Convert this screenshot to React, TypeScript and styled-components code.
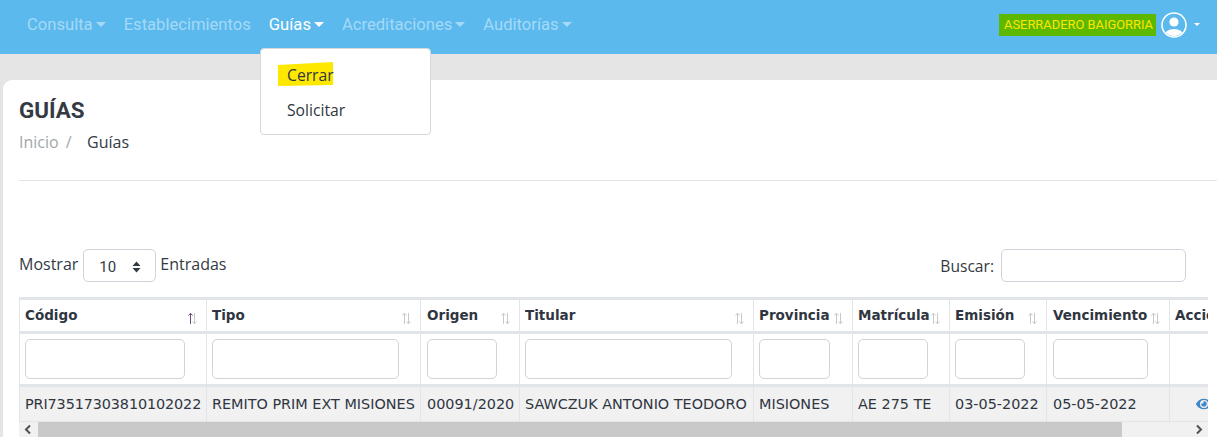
import React from "react";
import styled, { createGlobalStyle } from "styled-components";
import { FaEye } from "react-icons/fa";

const Global = createGlobalStyle`
  html, body { margin: 0; padding: 0; height: 437px; overflow: hidden; background: #e5e5e5; }
  * { box-sizing: border-box; }
  body { font-family: "Noto Sans", "Open Sans", sans-serif; color: #333a45; }
`;

const Page = styled.div`
  width: 1217px;
  height: 437px;
  position: relative;
  overflow: hidden;
`;

const NavBar = styled.nav`
  height: 54px;
  background: #5bb9ee;
  display: flex;
  align-items: center;
  justify-content: space-between;
  padding: 0 17px 5px 18px;
  font-family: Roboto, sans-serif;
`;

const NavList = styled.div`
  display: flex;
  align-items: center;
`;

const NavLink = styled.span<{ $active?: boolean }>`
  font-size: 16.6px;
  line-height: 24px;
  padding: 0 9px;
  color: ${(p) => (p.$active ? "#ffffff" : "#a5d9f6")};
  white-space: nowrap;
`;

const Caret = styled.i<{ $small?: boolean }>`
  display: inline-block;
  margin-left: ${(p) => (p.$small ? 0 : 3)}px;
  vertical-align: 3px;
  border-top: ${(p) => (p.$small ? 3.5 : 5)}px solid currentColor;
  border-left: ${(p) => (p.$small ? 3 : 5)}px solid transparent;
  border-right: ${(p) => (p.$small ? 3 : 5)}px solid transparent;
`;

const UserBox = styled.div`
  display: flex;
  align-items: center;
  color: #fff;
`;

const Company = styled.span`
  background: #5cb800;
  color: #ffe600;
  font-size: 12.9px;
  line-height: 22px;
  height: 22px;
  width: 157px;
  padding-left: 5px;
  white-space: nowrap;
`;

const Avatar = styled.svg`
  width: 26px;
  height: 26px;
  margin-left: 5px;
  margin-right: 7px;
`;

const Menu = styled.div`
  position: absolute;
  left: 260px;
  top: 48px;
  width: 171px;
  height: 87px;
  background: #fff;
  border: 1px solid #d5d8dc;
  border-radius: 4px;
  padding: 9px 0;
  color: #2f3640;
  z-index: 5;
`;

const MenuItem = styled.div`
  height: 35px;
  line-height: 35px;
  padding-left: 26px;
  position: relative;
  font-family: "Open Sans", sans-serif;
  font-size: 15.7px;
`;

const Marker = styled.span`
  position: absolute;
  left: 17px;
  top: 4px;
  width: 55px;
  height: 24px;
  background: #ffe800;
  clip-path: polygon(0 12%, 100% 0, 100% 96%, 0 100%);
`;

const MenuText = styled.span`
  position: relative;
`;

const Main = styled.main`
  padding: 26px 0 0 3px;
`;

const Card = styled.section`
  width: 1230px;
  height: 360px;
  background: #fff;
  border-radius: 9px 0 0 0;
  padding: 16px 0 0 16px;
`;

const Title = styled.h1`
  margin: 0;
  font-family: Roboto, sans-serif;
  font-weight: 700;
  font-size: 22.4px;
  line-height: 28px;
  color: #343a44;
`;

const Crumbs = styled.div`
  display: flex;
  margin-top: 7px;
  font-size: 16px;
  line-height: 22px;
  font-family: "Open Sans", sans-serif;
`;

const CrumbMuted = styled.span`
  color: #a3a7ab;
  width: 68px;
  word-spacing: 3px;
`;

const CrumbNow = styled.span`
  color: #343a44;
`;

const Rule = styled.hr`
  margin: 27px 0 0;
  width: 1198px;
  border: 0;
  border-top: 1px solid #e3e5e8;
`;

const Controls = styled.div`
  display: flex;
  justify-content: space-between;
  align-items: flex-start;
  width: 1167px;
  height: 48px;
  margin-top: 68px;
`;

const LengthBox = styled.div`
  display: flex;
  align-items: flex-start;
  font-family: "Open Sans", sans-serif;
  font-size: 16px;
  color: #343a44;
  line-height: 30px;
`;

const SelectBox = styled.div`
  width: 73px;
  height: 33px;
  margin: 0 4px 0 5px;
  border: 1px solid #ced4da;
  border-radius: 5px;
  display: flex;
  align-items: center;
  justify-content: space-between;
  padding: 3px 14px 0 15px;
  font-family: Roboto, sans-serif;
  font-size: 15px;
  line-height: 20px;
`;

const SearchBox = styled.div`
  display: flex;
  align-items: center;
  font-family: "Open Sans", sans-serif;
  font-size: 15.6px;
  color: #343a44;
`;

const SearchInput = styled.div`
  width: 185px;
  height: 33px;
  margin-left: 7px;
  border: 1px solid #ced4da;
  border-radius: 5px;
`;

const TableWrap = styled.div`
  width: 1189px;
  height: 125px;
  overflow: hidden;
`;

const Table = styled.table`
  table-layout: fixed;
  width: 1240px;
  border-collapse: collapse;
  font-family: "DejaVu Sans", sans-serif;
  font-size: 14.4px;
  color: #30363f;
`;

const Head = styled.th<{ $pad?: number }>`
  height: 34px;
  border: 1px solid #e1e4e8;
  border-top-width: 3px;
  border-bottom-width: 3px;
  padding: 0 0 2px ${(p) => p.$pad ?? 5}px;
  text-align: left;
  font-weight: 700;
  white-space: nowrap;
  position: relative;
  overflow: hidden;
  font-size: 13.5px;
`;

const SortIcon = styled.svg`
  position: absolute;
  right: 8px;
  bottom: 6px;
  width: 11px;
  height: 13px;
`;

const FilterCell = styled.td<{ $pad?: number }>`
  height: 53px;
  border: 1px solid #e1e4e8;
  border-bottom-width: 3px;
  padding: 0 0 0 ${(p) => p.$pad ?? 5}px;
`;

const FilterInput = styled.div<{ $w: number }>`
  height: 40px;
  width: ${(p) => p.$w}px;
  border: 1px solid #ced4da;
  border-radius: 5px;
  background: #fff;
`;

const DataCell = styled.td<{ $pad?: number; $tight?: boolean }>`
  height: 36px;
  background: #f1f1f2;
  border: 1px solid #e1e4e8;
  border-top: 0;
  padding: 0 0 0 ${(p) => p.$pad ?? 5}px;
  white-space: nowrap;
  overflow: hidden;
  letter-spacing: ${(p) => (p.$tight ? "-0.12px" : "normal")};
`;

const EyeCell = styled(DataCell)`
  color: #3f87c9;
  font-size: 16px;
  padding-top: 4px;
`;

const ScrollBar = styled.div`
  width: 1189px;
  height: 15px;
  background: #f1f1f1;
  display: flex;
  align-items: center;
`;

const ScrollArrow = styled.svg`
  width: 19px;
  height: 15px;
  flex: none;
`;

const Thumb = styled.div`
  width: 1084px;
  height: 15px;
  background: #c9c9c9;
`;

const Filler = styled.div`
  flex: 1;
`;

const cols = [
  { t: "Código", w: 187, input: 160, v: "PRI73517303810102022", active: true, tight: true },
  { t: "Tipo", w: 214, input: 187, v: "REMITO PRIM EXT MISIONES" },
  { t: "Origen", w: 99, input: 70, v: "00091/2020", pad: 6 },
  { t: "Titular", w: 234, input: 207, v: "SAWCZUK ANTONIO TEODORO" },
  { t: "Provincia", w: 99, input: 71, v: "MISIONES" },
  { t: "Matrícula", w: 97, input: 70, v: "AE 275 TE" },
  { t: "Emisión", w: 97, input: 70, v: "03-05-2022" },
  { t: "Vencimiento", w: 123, input: 95, v: "05-05-2022", pad: 6 },
];

const Sort = ({ active }: { active?: boolean }) => (
  <SortIcon viewBox="0 0 11 13" fill="none" strokeWidth="1">
    <path d="M3.5 12V1.5M1.5 3.5 3.5 1.2 5.5 3.5" stroke={active ? "#6a4a78" : "#c6c9cc"} />
    <path d="M7.5 1V11.5M5.5 9.5 7.5 11.8 9.5 9.5" stroke="#c6c9cc" />
  </SortIcon>
);

export default function App() {
  return (
    <Page>
      <Global />
      <NavBar>
        <NavList>
          <NavLink>Consulta<Caret /></NavLink>
          <NavLink>Establecimientos</NavLink>
          <NavLink $active>Guías<Caret /></NavLink>
          <NavLink>Acreditaciones<Caret /></NavLink>
          <NavLink>Auditorías<Caret /></NavLink>
        </NavList>
        <UserBox>
          <Company>ASERRADERO BAIGORRIA</Company>
          <Avatar viewBox="0 0 26 26">
            <defs>
              <clipPath id="av"><circle cx="13" cy="13" r="11" /></clipPath>
            </defs>
            <circle cx="13" cy="13" r="12" fill="none" stroke="#fff" strokeWidth="1.6" />
            <g clipPath="url(#av)" fill="#fff">
              <circle cx="13" cy="10" r="4.6" />
              <ellipse cx="13" cy="23" rx="9.5" ry="6" />
            </g>
          </Avatar>
          <Caret $small />
        </UserBox>
      </NavBar>
      <Menu>
        <MenuItem><Marker /><MenuText>Cerrar</MenuText></MenuItem>
        <MenuItem><MenuText>Solicitar</MenuText></MenuItem>
      </Menu>
      <Main>
        <Card>
          <Title>GUÍAS</Title>
          <Crumbs>
            <CrumbMuted>Inicio /</CrumbMuted>
            <CrumbNow>Guías</CrumbNow>
          </Crumbs>
          <Rule />
          <Controls>
            <LengthBox>
              Mostrar
              <SelectBox>
                10
                <svg width="9" height="12" viewBox="0 0 9 12" fill="#343a44">
                  <path d="M4.5 0.5 8.5 5H0.5ZM4.5 11.5 0.5 7H8.5Z" />
                </svg>
              </SelectBox>
              Entradas
            </LengthBox>
            <SearchBox>
              Buscar:
              <SearchInput />
            </SearchBox>
          </Controls>
          <TableWrap>
            <Table>
              <colgroup>
                {cols.map((c) => <col key={c.t} style={{ width: c.w }} />)}
                <col style={{ width: 90 }} />
              </colgroup>
              <thead>
                <tr>
                  {cols.map((c) => (
                    <Head key={c.t} $pad={c.pad}>{c.t}<Sort active={c.active} /></Head>
                  ))}
                  <Head>Acciones</Head>
                </tr>
              </thead>
              <tbody>
                <tr>
                  {cols.map((c) => (
                    <FilterCell key={c.t} $pad={c.pad}><FilterInput $w={c.input} /></FilterCell>
                  ))}
                  <FilterCell />
                </tr>
                <tr>
                  {cols.map((c) => <DataCell key={c.t} $pad={c.pad} $tight={c.tight}>{c.v}</DataCell>)}
                  <EyeCell $pad={26}><FaEye /></EyeCell>
                </tr>
              </tbody>
            </Table>
          </TableWrap>
          <ScrollBar>
            <ScrollArrow viewBox="0 0 19 15">
              <path d="M11 3.5 7 7.5 11 11.5" fill="none" stroke="#505050" strokeWidth="2" />
            </ScrollArrow>
            <Thumb />
            <Filler />
            <ScrollArrow viewBox="0 0 19 15">
              <path d="M8 3.5 12 7.5 8 11.5" fill="none" stroke="#505050" strokeWidth="2" />
            </ScrollArrow>
          </ScrollBar>
        </Card>
      </Main>
    </Page>
  );
}
